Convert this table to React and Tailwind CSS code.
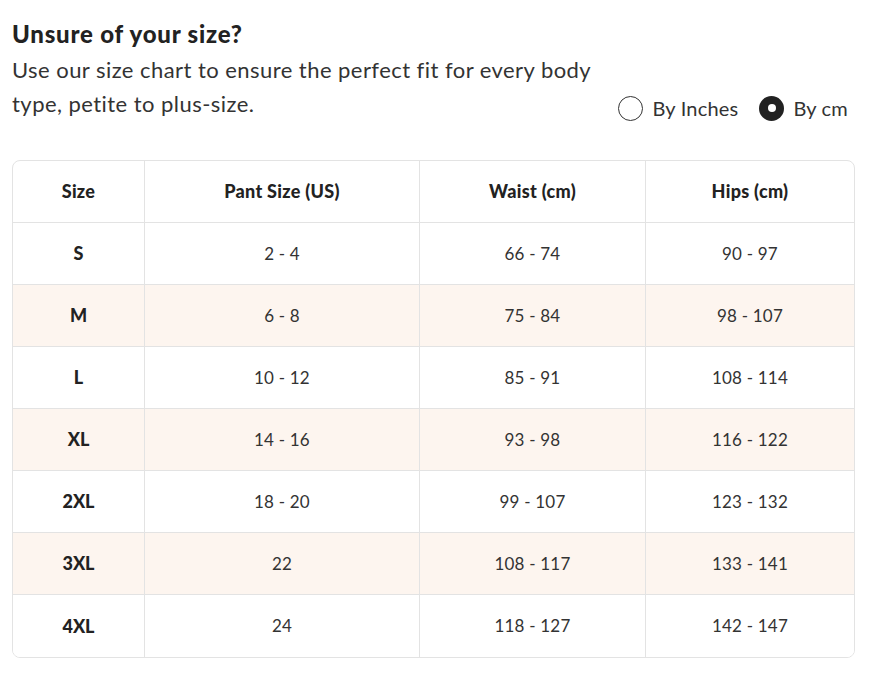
import { useState } from 'react'

const ROWS = [
    ['S', '2 - 4', '66 - 74', '90 - 97'],
    ['M', '6 - 8', '75 - 84', '98 - 107'],
    ['L', '10 - 12', '85 - 91', '108 - 114'],
    ['XL', '14 - 16', '93 - 98', '116 - 122'],
    ['2XL', '18 - 20', '99 - 107', '123 - 132'],
    ['3XL', '22', '108 - 117', '133 - 141'],
    ['4XL', '24', '118 - 127', '142 - 147'],
]

const HEADERS = ['Size', 'Pant Size (US)', 'Waist (cm)', 'Hips (cm)']

function Radio({ label, checked, onClick }) {
    return (
        <button onClick={onClick} className="flex items-center gap-[9px] text-[20px] tracking-[0.2px] text-[#333]">
            {checked ? (
                <span className="w-[25px] h-[25px] rounded-full bg-[#222] flex items-center justify-center">
                    <span className="w-[8px] h-[8px] rounded-full bg-white" />
                </span>
            ) : (
                <span className="w-[25px] h-[25px] rounded-full border border-[#333]" />
            )}
            <span>{label}</span>
        </button>
    )
}

export default function App() {
    const [unit, setUnit] = useState('cm')

    return (
        <div className="w-[888px] h-[675px] bg-white px-[12px] pt-[19px] font-['Lato','Noto_Sans',sans-serif] text-[#333]">
            <h2 className="text-[24px] leading-[30px] font-black tracking-[0.8px] text-[#222]">Unsure of your size?</h2>
            <div className="flex items-end justify-between mt-[4px] w-[843px]">
                <p className="text-[22px] leading-[34px] tracking-[0.45px] w-[600px]">
                    Use our size chart to ensure the perfect fit for every body type, petite to plus-size.
                </p>
                <div className="flex items-center gap-[21px] pr-[7px] mb-[-2px]">
                    <Radio label="By Inches" checked={unit === 'in'} onClick={() => setUnit('in')} />
                    <Radio label="By cm" checked={unit === 'cm'} onClick={() => setUnit('cm')} />
                </div>
            </div>

            <div className="mt-[39px] w-[843px] rounded-[8px] border border-[#e3e3e3] overflow-hidden">
                <div className="grid grid-cols-[132px_275px_226px_1fr] h-[62px] border-b border-[#e3e3e3]">
                    {HEADERS.map((h, i) => (
                        <div key={h} className={`flex items-center justify-center text-[18px] font-black tracking-[0.3px] text-[#222] ${i < 3 ? 'border-r border-[#e3e3e3]' : ''}`}>
                            {h}
                        </div>
                    ))}
                </div>
                {ROWS.map((row, r) => (
                    <div
                        key={row[0]}
                        className={`grid grid-cols-[132px_275px_226px_1fr] h-[62px] ${r % 2 === 1 ? 'bg-[#fdf5ef]' : 'bg-white'} ${r < ROWS.length - 1 ? 'border-b border-[#e3e3e3]' : ''}`}
                    >
                        {row.map((cell, i) => (
                            <div
                                key={i}
                                className={`flex items-center justify-center ${i === 0 ? 'text-[18px] font-black text-[#222]' : 'text-[17px] font-normal tracking-[0.2px] text-[#333]'} ${i < 3 ? 'border-r border-[#e3e3e3]' : ''}`}
                            >
                                {cell}
                            </div>
                        ))}
                    </div>
                ))}
            </div>
        </div>
    )
}
